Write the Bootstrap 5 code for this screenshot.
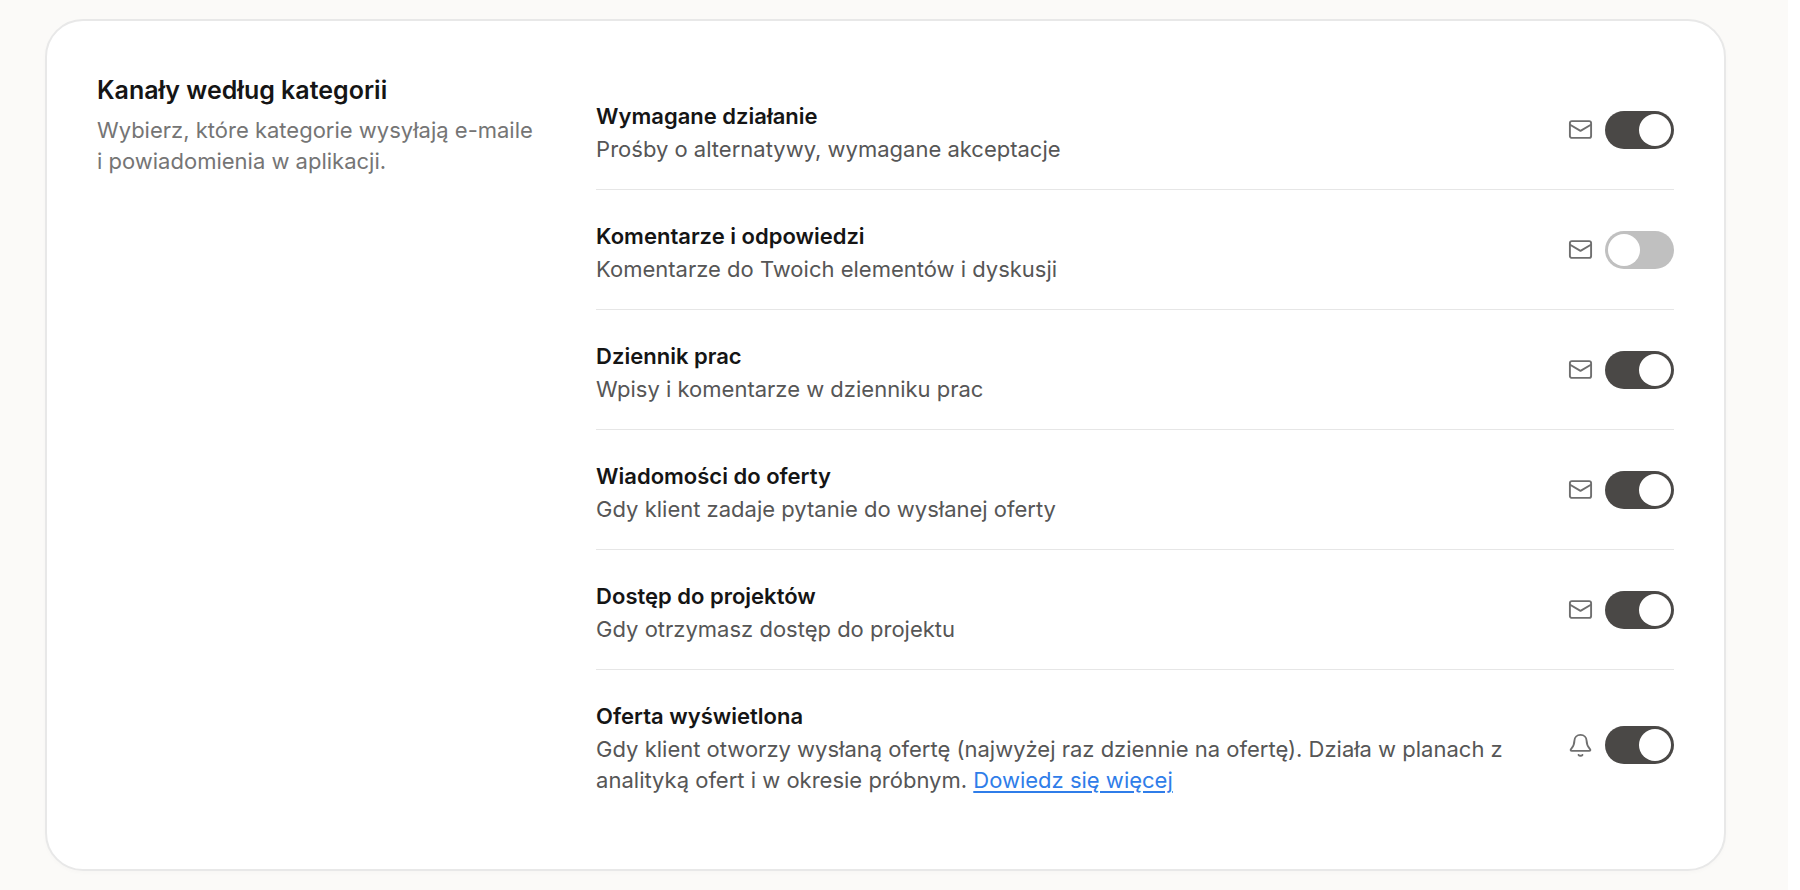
<!DOCTYPE html>
<html lang="pl">
<head>
<meta charset="utf-8">
<meta name="viewport" content="width=device-width, initial-scale=1">
<title>Kanały według kategorii</title>
<link rel="stylesheet" href="https://cdn.jsdelivr.net/npm/bootstrap@5.3.0/dist/css/bootstrap.min.css">
<style>
  html { background: #fff; }
  body {
    margin-right: 12px;
    min-height: 100vh;
    background: #fbfaf8;
    font-family: Inter, "Liberation Sans", sans-serif;
    font-size: 22px;
    line-height: 31px;
    color: #565656;
  }
  .page-wrap { padding: 19px 62px 18px 45px; }
  .settings-card {
    padding: 49px 50px;
    border: 2px solid #e8e8e8;
    border-radius: 38px;
    box-shadow: 0 2px 4px rgba(0, 0, 0, .02);
    --bs-card-color: #565656;
  }
  .settings-title { margin-bottom: 5px; font-size: 25px; line-height: 40px; font-weight: 600; color: #151515; }
  .settings-intro { color: #757575; }
  .channel { padding: 24px 0; }
  .channel + .channel { border-top: 1px solid #e6e6e6; }
  .channel-name { padding-top: 5px; line-height: 35px; font-weight: 600; color: #151515; }
  .channel-link { color: #2f7de9; text-underline-offset: 3px; text-decoration-thickness: 2px; }
  .channel-icon { width: 25px; height: 25px; fill: none; stroke: #6f6f6f; stroke-width: 1.9; stroke-linecap: round; stroke-linejoin: round; }
  .form-switch.channel-switch { padding: 0; min-height: 0; }
  .form-switch.channel-switch .form-check-input {
    width: 69px; height: 38px; border: 0; border-radius: 19px; background-color: #c0c0c0;
    background-image: url("data:image/svg+xml,%3csvg xmlns='http://www.w3.org/2000/svg' viewBox='-19 -19 38 38'%3e%3ccircle r='16' fill='%23fff'/%3e%3c/svg%3e");
  }
  .form-switch.channel-switch .form-check-input:checked { background-color: #4a4846; }
  @media (min-width: 992px) {
    .settings-grid { display: grid; grid-template-columns: 5fr 12fr; column-gap: 50px; }
  }
</style>
</head>
<body>
<svg class="d-none" aria-hidden="true">
  <symbol id="icon-mail" viewBox="0 0 25 25">
    <rect x="1.9" y="4.1" width="21.2" height="16.8" rx="2"/>
    <path d="M2.1 7.7 12.5 13.9 22.9 7.7"/>
  </symbol>
  <symbol id="icon-bell" viewBox="0 0 25 25">
    <path d="M12.5 1.9C8.9 1.9 6.5 4.4 6.4 7.7C6.3 11.5 5.7 13.1 3.4 15.6C2.1 17 2.6 17.9 3.9 17.9H21.1C22.4 17.9 22.9 17 21.6 15.6C19.3 13.1 18.7 11.5 18.6 7.7C18.5 4.4 16.1 1.9 12.5 1.9Z"/>
    <path d="M10.6 21.9C11.3 23.1 13.7 23.1 14.4 21.9"/>
  </symbol>
</svg>
<main class="page-wrap">
  <section class="card settings-card">
    <div class="settings-grid">
      <header>
        <h2 class="settings-title">Kanały według kategorii</h2>
        <p class="settings-intro mb-0">Wybierz, które kategorie wysyłają e-maile i&nbsp;powiadomienia w aplikacji.</p>
      </header>
      <div>
        <div class="channel d-flex align-items-center justify-content-between">
          <div class="pe-5">
            <label class="channel-name d-block" for="ch-action">Wymagane działanie</label>
            <p class="mb-0">Prośby o alternatywy, wymagane akceptacje</p>
          </div>
          <div class="d-flex align-items-center flex-shrink-0">
            <svg class="channel-icon me-2" aria-hidden="true"><use href="#icon-mail"/></svg>
            <div class="form-check form-switch channel-switch mb-0 ms-1"><input class="form-check-input m-0 d-block" type="checkbox" role="switch" id="ch-action" checked></div>
          </div>
        </div>
        <div class="channel d-flex align-items-center justify-content-between">
          <div class="pe-5">
            <label class="channel-name d-block" for="ch-comments">Komentarze i odpowiedzi</label>
            <p class="mb-0">Komentarze do Twoich elementów i dyskusji</p>
          </div>
          <div class="d-flex align-items-center flex-shrink-0">
            <svg class="channel-icon me-2" aria-hidden="true"><use href="#icon-mail"/></svg>
            <div class="form-check form-switch channel-switch mb-0 ms-1"><input class="form-check-input m-0 d-block" type="checkbox" role="switch" id="ch-comments"></div>
          </div>
        </div>
        <div class="channel d-flex align-items-center justify-content-between">
          <div class="pe-5">
            <label class="channel-name d-block" for="ch-log">Dziennik prac</label>
            <p class="mb-0">Wpisy i komentarze w dzienniku prac</p>
          </div>
          <div class="d-flex align-items-center flex-shrink-0">
            <svg class="channel-icon me-2" aria-hidden="true"><use href="#icon-mail"/></svg>
            <div class="form-check form-switch channel-switch mb-0 ms-1"><input class="form-check-input m-0 d-block" type="checkbox" role="switch" id="ch-log" checked></div>
          </div>
        </div>
        <div class="channel d-flex align-items-center justify-content-between">
          <div class="pe-5">
            <label class="channel-name d-block" for="ch-messages">Wiadomości do oferty</label>
            <p class="mb-0">Gdy klient zadaje pytanie do wysłanej oferty</p>
          </div>
          <div class="d-flex align-items-center flex-shrink-0">
            <svg class="channel-icon me-2" aria-hidden="true"><use href="#icon-mail"/></svg>
            <div class="form-check form-switch channel-switch mb-0 ms-1"><input class="form-check-input m-0 d-block" type="checkbox" role="switch" id="ch-messages" checked></div>
          </div>
        </div>
        <div class="channel d-flex align-items-center justify-content-between">
          <div class="pe-5">
            <label class="channel-name d-block" for="ch-access">Dostęp do projektów</label>
            <p class="mb-0">Gdy otrzymasz dostęp do projektu</p>
          </div>
          <div class="d-flex align-items-center flex-shrink-0">
            <svg class="channel-icon me-2" aria-hidden="true"><use href="#icon-mail"/></svg>
            <div class="form-check form-switch channel-switch mb-0 ms-1"><input class="form-check-input m-0 d-block" type="checkbox" role="switch" id="ch-access" checked></div>
          </div>
        </div>
        <div class="channel d-flex align-items-center justify-content-between">
          <div class="pe-5">
            <label class="channel-name d-block" for="ch-viewed">Oferta wyświetlona</label>
            <p class="mb-0">Gdy klient otworzy wysłaną ofertę (najwyżej raz dziennie na ofertę). Działa w planach z analityką ofert i w okresie próbnym. <a class="channel-link" href="#">Dowiedz się więcej</a></p>
          </div>
          <div class="d-flex align-items-center flex-shrink-0">
            <svg class="channel-icon me-2" aria-hidden="true"><use href="#icon-bell"/></svg>
            <div class="form-check form-switch channel-switch mb-0 ms-1"><input class="form-check-input m-0 d-block" type="checkbox" role="switch" id="ch-viewed" checked></div>
          </div>
        </div>
      </div>
    </div>
  </section>
</main>
<script src="https://cdn.jsdelivr.net/npm/bootstrap@5.3.0/dist/js/bootstrap.bundle.min.js"></script>
</body>
</html>
